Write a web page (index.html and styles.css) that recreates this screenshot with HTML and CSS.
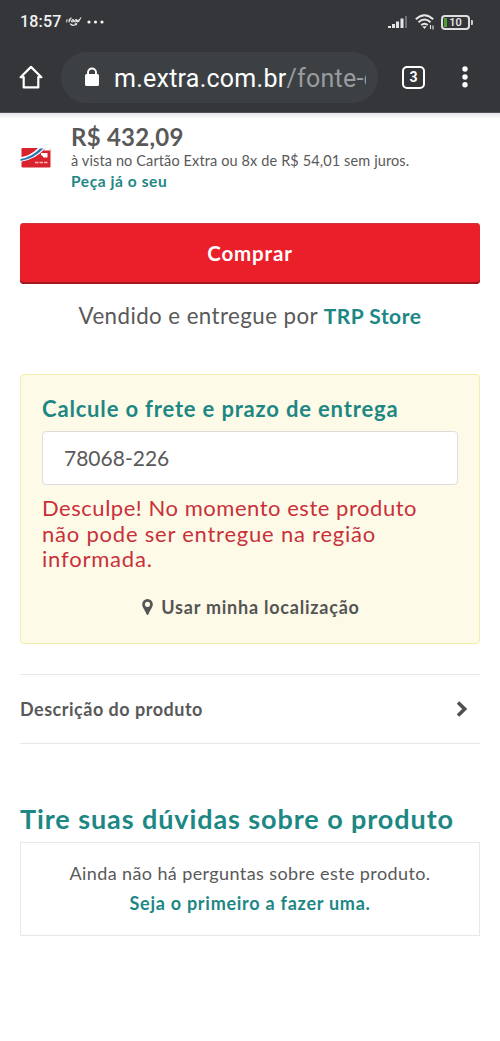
FILE: index.html
```html
<!DOCTYPE html>
<html lang="pt-BR">
<head>
<meta charset="utf-8">
<meta name="viewport" content="width=device-width">
<title>Extra</title>
<link rel="stylesheet" href="styles.css">
</head>
<body>
<header class="chrome">
  <div class="status">
    <span class="clock">18:57</span>
    <svg class="ifood" width="16" height="10" viewBox="0 0 16 10" fill="none" stroke="#e8e8e8" stroke-width="1.1" stroke-linecap="round"><path d="M1 2.5 .7 5M3 5 4 1.8Q4.5.8 5.3 1M2.8 3h2M6 3.5q-1 1.7.4 1.5T7.5 3.3 6 3.5M9 3.3q-1 1.9.4 1.7T10.500 3.200 9 3.300M13 3q-2 0-1.500 1.700.900.600 1.800-1.500L14.800.800M4.500 7q2.500 2.500 5.500.3M9.200 6.900l1.300-.200-.2 1.300"/></svg>
    <svg class="dots" width="18" height="4" viewBox="0 0 18 4" fill="#f4f4f4"><circle cx="2" cy="2" r="1.6"/><circle cx="8.500" cy="2" r="1.600"/><circle cx="15" cy="2" r="1.600"/></svg>
    <svg class="signal" width="20" height="14" viewBox="0 0 20 14" fill="#e4e4e6"><rect x="0" y="11" width="3" height="2"/><rect x="4" y="9" width="3" height="4"/><rect x="8" y="6.500" width="3" height="6.500"/><rect x="12.500" y="3.500" width="3" height="9.500"/><rect x="17" y="1" width="2" height="12" fill="#707074"/></svg>
    <svg class="wifi" width="20" height="16" viewBox="0 0 20 16" fill="none" stroke="#e8e8e8" stroke-width="1.900"><path d="M.8 5.200Q9.500-2.800 18.200 5.200M3.500 8.200Q9.500 2.900 15.500 8.200M6.200 11Q9.500 8.300 12.800 11"/><path d="M7.300 12.300h4.400l-2.200 2.800z" fill="#e8e8e8" stroke="none"/><path d="M15.500 11v4M18 11.500v4" stroke-width="1.100"/></svg>
    <span class="battery"><i class="charge"></i><b>10</b></span><i class="cap"></i>
  </div>
  <div class="toolbar">
    <svg class="home" width="24" height="24" viewBox="0 0 24 24" fill="none" stroke="#fff" stroke-width="2.200" stroke-linejoin="round"><path d="M1.600 12.200 12 1.900l10.400 10.300h-3.100v10.200H4.700V12.200z"/></svg>
    <div class="omnibox">
      <svg width="16" height="20" viewBox="0 0 16 20"><path d="M4 8V5.500a4 4 0 0 1 8 0V8" fill="none" stroke="#fff" stroke-width="1.900"/><rect x="1" y="7" width="14" height="12" rx="1.500" fill="#fff"/></svg>
      <div class="url">m.extra.com.br<span>/fonte-d</span></div>
    </div>
    <div class="tabs">3</div>
    <svg class="menu" width="6" height="22" viewBox="0 0 6 22" fill="#fff"><circle cx="3" cy="3" r="2.700"/><circle cx="3" cy="11" r="2.700"/><circle cx="3" cy="18.800" r="2.700"/></svg>
  </div>
</header>
<main class="page">
  <section class="offer">
    <svg class="card" width="32" height="22" viewBox="0 0 32 22"><rect x="1.500" y="1" width="29" height="19.500" rx="1.200" fill="#d8232f"/><path d="M0 10.300Q10 9 17 2L18 1h7.500Q16 12.500 0 15z" fill="#fff"/><path d="M.5 12Q12 10 20 1.500h3.500Q14 11.800.5 14z" fill="#2779b5"/><path d="M23.500 3.500h7V1h-5z" fill="#fff"/><path d="M21 6h6.500v4.500h-4q-.5-2-2.500-2.500z" fill="#fff"/><path d="M15 15.500h3.500m1 0H23m1 0h3.500" stroke="#f3b5b7" stroke-width="1.400"/></svg>
    <div class="offer-text">
      <strong class="price">R$ 432,09</strong>
      <span class="terms">à vista no Cartão Extra ou 8x de R$ 54,01 sem juros.</span>
      <a class="apply">Peça já o seu</a>
    </div>
  </section>
  <button class="buy"><span>Comprar</span></button>
  <p class="seller"><span class="sold">Vendido e entregue por</span> <a>TRP Store</a></p>
  <section class="shipping">
    <h2>Calcule o frete e prazo de entrega</h2>
    <div class="cep">78068-226</div>
    <p class="error"><span class="e1">Desculpe! No momento este produto</span><br><span class="e2">não pode ser entregue na região</span><br><span class="e3">informada.</span></p>
    <a class="locate"><svg width="11" height="16" viewBox="0 0 11 16"><path fill-rule="evenodd" d="M5.500 0A5.300 5.300 0 0 0 .2 5.300C.2 8.500 3 11 4.400 15q1.100 1.800 2.200 0C8 11 10.800 8.500 10.800 5.300A5.300 5.300 0 0 0 5.500 0m0 2.700a2.600 2.600 0 1 1 0 5.200 2.600 2.600 0 0 1 0-5.200" fill="#555"/></svg><span>Usar minha localização</span></a>
  </section>
  <section class="description">
    <span>Descrição do produto</span>
    <svg width="12" height="16" viewBox="0 0 12 16" fill="none" stroke="#505050" stroke-width="3.600"><path d="M2 1.500 8.700 8 2 14.500"/></svg>
  </section>
  <section class="questions">
    <h2>Tire suas dúvidas sobre o produto</h2>
    <div class="empty">
      <span class="none">Ainda não há perguntas sobre este produto.</span>
      <a>Seja o primeiro a fazer uma.</a>
    </div>
  </section>
</main>
</body>
</html>
```
FILE: styles.css
```css
* { box-sizing: border-box; }
body { margin: 0; background: #fff; color: #595959; font-family: Lato, "Open Sans", sans-serif; }
h2, p { margin: 0; }
a, h2 { color: #1d8784; font-weight: 700; }
span, a, h2 { white-space: nowrap; }
svg { display: block; flex: none; }

.chrome { height: 113px; background: #35363a; border-bottom: 1px solid #55515a; font-family: Roboto, sans-serif; color: #fff; }
.status { height: 44px; display: flex; align-items: center; padding-left: 20px; }
.clock { width: 42px; font-size: 16px; font-weight: 500; line-height: 20px; letter-spacing: .2px; color: #f2f2f2; }
.ifood { margin-left: 4px; }
.dots { margin-left: 5px; }
.signal { margin-left: 283px; }
.wifi { margin-left: 7px; }
.battery { position: relative; width: 29px; height: 15px; margin-left: 6px; border: 2px solid #dedede; border-radius: 4px; display: flex; justify-content: center; align-items: center; }
.battery b { font-size: 11px; font-weight: 500; line-height: 11px; color: #eee; }
.charge { position: absolute; left: 1px; top: 1px; width: 3px; height: 9px; background: #4f9e35; }
.cap { width: 2px; height: 5px; margin-left: 1px; background: #ccc; border-radius: 0 1px 1px 0; }
.toolbar { height: 66px; display: flex; align-items: center; padding-left: 19px; }
.omnibox { width: 317px; height: 51px; margin-left: 18px; padding: 0 12px 0 23px; border-radius: 26px; background: #3c4043; display: flex; align-items: center; }
.url { margin-left: 14px; width: 252px; overflow: hidden; white-space: nowrap; font-size: 25px; line-height: 34px; padding-top: 3px; letter-spacing: .25px; }
.url span { color: #999c9f; }
.tabs { width: 23px; height: 23px; margin-left: 24px; border: 2px solid #fff; border-radius: 5px; font-size: 14px; line-height: 19px; font-weight: 700; text-align: center; }
.menu { margin-left: 37px; }

.page { height: 928px; padding: 0 20px; background: linear-gradient(#e5e4e6, #fff 6px); }
.offer { height: 110px; padding-top: 10px; display: flex; }
.card { margin: 24px 19px 0 0; }
.offer-text { display: flex; flex-direction: column; align-items: flex-start; }
.price { font-size: 24px; line-height: 28px; letter-spacing: .25px; }
.terms { font-size: 14.5px; line-height: 20px; letter-spacing: .12px; }
.apply { font-size: 15.5px; line-height: 21px; letter-spacing: .58px; }
.buy { display: flex; align-items: center; justify-content: center; width: 460px; height: 61px; padding: 0 0 2px; border: 0; border-radius: 4px; background: #eb1f2a; box-shadow: inset 0 1px #d3333c, inset 0 -2px #a11720; color: #fff; font: 700 20.5px/28px Lato, sans-serif; letter-spacing: .85px; }
.seller { height: 90px; padding-top: 17px; text-align: center; font-size: 22.3px; line-height: 30px; letter-spacing: .43px; }
.seller a { font-size: 21px; letter-spacing: .5px; }
.shipping { height: 270px; padding: 19px 21px 0; border: 1px solid #f3edae; border-radius: 4px; background: #fdfbe7; }
.shipping h2 { font-size: 22px; line-height: 30px; height: 37px; letter-spacing: .83px; }
.cep { height: 54px; padding-left: 21px; border: 1px solid #ddd; border-radius: 4px; background: #fff; font-size: 21px; line-height: 52px; }
.error { height: 107px; padding-top: 10px; color: #c9303b; font-size: 22px; line-height: 25.5px; }
.e1 { letter-spacing: .53px; }
.e2 { letter-spacing: .78px; }
.e3 { letter-spacing: .8px; }
.locate { display: flex; align-items: center; justify-content: center; gap: 8px; height: 30px; padding-left: 2px; color: #555; font-size: 18px; letter-spacing: .77px; }
.description { height: 70px; margin-top: 30px; padding-right: 12px; border: solid #e8e8e8; border-width: 1px 0; display: flex; align-items: center; justify-content: space-between; font-size: 18px; font-weight: 700; letter-spacing: .5px; }
.questions { padding-top: 56px; }
.questions h2 { font-size: 27px; line-height: 38px; height: 42px; letter-spacing: .91px; }
.empty { height: 94px; padding-top: 15px; border: 1px solid #e8e8e8; display: flex; flex-direction: column; align-items: center; font-size: 18px; line-height: 30px; letter-spacing: .4px; }
.empty a { letter-spacing: .74px; }
```
